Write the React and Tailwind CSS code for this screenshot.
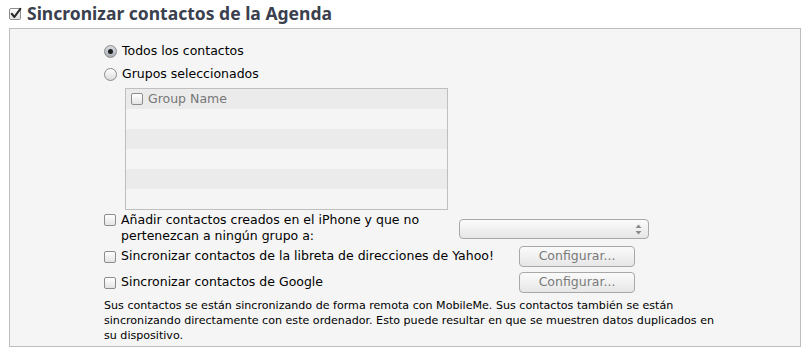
// App.jsx — preferencias de sincronización de contactos

const FUENTE = "font-['Lucida_Grande','DejaVu_Sans',sans-serif]"

function Casilla({ marcada = false, className = '' }) {
  return (
    <span className={`relative inline-block w-[12px] h-[12px] shrink-0 rounded-[2px] border border-[#8c8c8c] bg-gradient-to-b from-white to-[#e4e4e4] ${className}`}>
      {marcada && (
        <svg viewBox="0 0 12 12" className="absolute -left-px -top-[2px] w-[13px] h-[13px]">
          <path d="M2.5 6.2 L5 9.2 L10.5 1.8" fill="none" stroke="#2a2a2a" strokeWidth="1.9" strokeLinecap="round" strokeLinejoin="round" />
        </svg>
      )}
    </span>
  )
}

function Radio({ activo = false }) {
  return (
    <span className={`flex items-center justify-center w-[13px] h-[13px] shrink-0 rounded-full border border-[#8a8a8a] bg-gradient-to-b ${activo ? 'from-[#d8dbe0] to-[#a9afb8]' : 'from-white to-[#dcdcdc]'}`}>
      {activo && <span className="w-[5px] h-[5px] rounded-full bg-[#1e1e1e]" />}
    </span>
  )
}

function Boton({ children }) {
  return (
    <button className="w-[116px] h-[21px] rounded-[4px] border border-[#a8a8a8] bg-gradient-to-b from-[#fbfbfb] to-[#e6e6e6] text-[12.5px] text-[#7a7a7a] leading-none">
      {children}
    </button>
  )
}

export default function App() {
  const filas = [0, 1, 2, 3, 4]

  return (
    <div className={`w-[807px] h-[356px] bg-white ${FUENTE} text-black overflow-hidden`}>
      {/* ── Título ── */}
      <div className="flex items-center gap-[6px] pl-[9px] h-[27px] pt-[1px]">
        <Casilla marcada className="border-[#7d7d7d]" />
        <h1 className="font-['Noto_Sans',sans-serif] text-[17.5px] font-bold text-[#3a404e] leading-none">
          Sincronizar contactos de la Agenda
        </h1>
      </div>

      {/* ── Panel ── */}
      <div className="ml-[9px] mt-[1px] w-[792px] h-[319px] border border-[#bdbdbd] bg-[#f5f5f5] pl-[94px] pt-[11px] text-[12.5px]">
        <div className="flex items-center gap-[5px] h-[23px]">
          <Radio activo />
          <span>Todos los contactos</span>
        </div>
        <div className="flex items-center gap-[5px] h-[23px]">
          <Radio />
          <span>Grupos seleccionados</span>
        </div>

        {/* Lista de grupos */}
        <div className="ml-[21px] mt-[2px] w-[323px] h-[122px] border border-[#bfbfbf] flex flex-col">
          <div className="flex items-center gap-[5px] h-[20px] bg-[#ebebeb] pl-[5px]">
            <Casilla />
            <span className="text-[#777]">Group Name</span>
          </div>
          {filas.map(i => (
            <div key={i} className={`h-[20px] ${i % 2 === 0 ? 'bg-[#f5f5f5]' : 'bg-[#ebebeb]'}`} />
          ))}
        </div>

        {/* Opciones */}
        <div className="flex items-center h-[32px] mt-[3px]">
          <div className="flex items-start gap-[5px] w-[355px] -mt-[2px]">
            <Casilla className="mt-[2px]" />
            <span className="leading-[16px]">
              Añadir contactos creados en el iPhone y que no<br />pertenezcan a ningún grupo a:
            </span>
          </div>
          <div className="relative w-[190px] h-[20px] rounded-[4px] border border-[#a8a8a8] bg-gradient-to-b from-[#fbfbfb] to-[#e6e6e6]">
            <svg viewBox="0 0 7 11" className="absolute right-[6px] top-[4px] w-[7px] h-[11px]">
              <path d="M3.5 0.5 L6.5 4 L0.5 4 Z M3.5 10.5 L6.5 7 L0.5 7 Z" fill="#8a8a8a" />
            </svg>
          </div>
        </div>

        <div className="flex items-center h-[21px] mt-[1px]">
          <div className="flex items-center gap-[5px] w-[415px]">
            <Casilla />
            <span>Sincronizar contactos de la libreta de direcciones de Yahoo!</span>
          </div>
          <Boton>Configurar...</Boton>
        </div>

        <div className="flex items-center h-[21px] mt-[5px]">
          <div className="flex items-center gap-[5px] w-[415px]">
            <Casilla />
            <span>Sincronizar contactos de Google</span>
          </div>
          <Boton>Configurar...</Boton>
        </div>

        <p className="mt-[5px] whitespace-nowrap text-[11.1px] leading-[15px]">
          Sus contactos se están sincronizando de forma remota con MobileMe. Sus contactos también se están<br />
          sincronizando directamente con este ordenador. Esto puede resultar en que se muestren datos duplicados en<br />
          su dispositivo.
        </p>
      </div>
    </div>
  )
}
